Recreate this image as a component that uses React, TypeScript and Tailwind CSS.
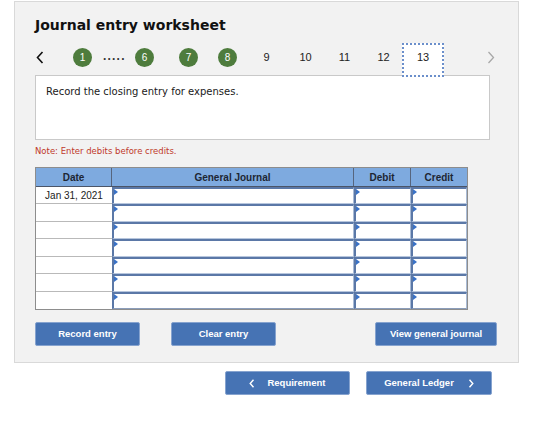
import React from "react";

const sans = { fontFamily: '"Liberation Sans", Arial, sans-serif' };
const verd = { fontFamily: '"DejaVu Sans", Verdana, sans-serif' };

function Circle({ n }: { n: string }) {
  return (
    <div className="w-[19px] h-[19px] rounded-full bg-[#4e7c3d] text-white text-[10px] flex items-center justify-center shrink-0" style={sans}>
      {n}
    </div>
  );
}

function Num({ n }: { n: string }) {
  return (
    <div className="w-[39px] shrink-0 text-center text-[11px] text-[#222]" style={sans}>
      {n}
    </div>
  );
}

function InputCell({ last }: { last?: boolean }) {
  return (
    <div className={`relative bg-white border-t-2 border-t-[#5b78a7] border-l-2 border-l-[#5b78a7] border-r border-r-[#a9bbd6] ${last ? "border-b border-b-[#8b9dba]" : "border-b border-b-[#b7c6dd]"}`}>
      <div className="absolute top-0 left-0 w-0 h-0 border-t-[3px] border-b-[3px] border-l-[4px] border-t-transparent border-b-transparent border-l-[#3a72c6]" />
    </div>
  );
}

function Btn({ children, w, className = "" }: { children: React.ReactNode; w: string; className?: string }) {
  return (
    <div
      className={`${w} h-[24px] shrink-0 bg-[#4673b4] border border-[#86a3cf] rounded-[2px] text-white text-[9.5px] font-bold flex items-center justify-center ${className}`}
      style={sans}
    >
      {children}
    </div>
  );
}

export default function App() {
  const heights = ["h-[17px]", "h-[18px]", "h-[17px]", "h-[18px]", "h-[17px]", "h-[18px]", "h-[17px]"];
  return (
    <div className="w-[560px] h-[421px] bg-white overflow-hidden">
      <div className="ml-[14px] mt-[1px] w-[505px] h-[362px] bg-[#f2f2f2] border border-[#d9d9d9] pl-[20px] pt-[15px]">
        <div className="text-[14px] leading-[17px] font-bold text-[#111]" style={verd}>
          Journal entry worksheet
        </div>

        <div className="mt-[9px] h-[28px] flex items-center relative z-10">
          <div className="w-[10px] shrink-0 flex justify-center">
            <svg width="8" height="13" viewBox="0 0 8 13">
              <polyline points="6.5,1 1.5,6.5 6.5,12" fill="none" stroke="#111" strokeWidth="1.6" />
            </svg>
          </div>
          <div className="ml-[28px]"><Circle n="1" /></div>
          <div className="ml-[11px] w-[29px] shrink-0 text-[12px] font-bold tracking-[1.2px] text-[#333] leading-[12px] pb-[3px]" style={sans}>
            .....
          </div>
          <div className="ml-[3px]"><Circle n="6" /></div>
          <div className="ml-[25px]"><Circle n="7" /></div>
          <div className="ml-[20px]"><Circle n="8" /></div>
          <div className="ml-[10px] flex">
            <Num n="9" />
            <Num n="10" />
            <Num n="11" />
            <Num n="12" />
          </div>
          <div className="-ml-[1px] self-start w-[42px] h-[34px] shrink-0 bg-white border-2 border-dotted border-[#6b8fcb] text-center text-[11px] leading-[14px] pt-[5px] text-[#222]" style={sans}>
            13
          </div>
          <div className="ml-[43px] shrink-0">
            <svg width="8" height="13" viewBox="0 0 8 13">
              <polyline points="1.5,1 6.5,6.5 1.5,12" fill="none" stroke="#a8a8a8" strokeWidth="1.3" />
            </svg>
          </div>
        </div>

        <div className="mt-[4px] w-[455px] h-[65px] bg-white border border-[#c9c9c9] pl-[10px] pt-[10px]">
          <div className="text-[10px] leading-[12px] text-[#1a1a1a]" style={verd}>
            Record the closing entry for expenses.
          </div>
        </div>

        <div className="mt-[5px] text-[8.5px] leading-[12px] text-[#c0392b]" style={verd}>
          Note: Enter debits before credits.
        </div>

        <div className="mt-[10px] w-[433px] border border-[#8d8d8d]" style={sans}>
          <div className="grid grid-cols-[76px_242px_57px_56px] h-[19px] bg-[#7eaadf] border-b border-b-[#4b5568] text-[10px] font-bold text-[#1d2633]">
            <div className="flex items-center justify-center border-r border-r-[#56657e]">Date</div>
            <div className="flex items-center justify-center border-r border-r-[#56657e]">General Journal</div>
            <div className="flex items-center justify-center border-r border-r-[#56657e]">Debit</div>
            <div className="flex items-center justify-center">Credit</div>
          </div>
          {heights.map((h, i) => (
            <div key={i} className={`grid grid-cols-[76px_242px_57px_56px] ${h}`}>
              <div className={`bg-white flex items-center justify-center text-[10px] text-[#222] ${i < 6 ? "border-b border-b-[#b9b9b9]" : ""}`}>
                {i === 0 ? "Jan 31, 2021" : ""}
              </div>
              <InputCell last={i === 6} />
              <InputCell last={i === 6} />
              <InputCell last={i === 6} />
            </div>
          ))}
        </div>

        <div className="mt-[12px] flex">
          <Btn w="w-[105px]">Record entry</Btn>
          <Btn w="w-[105px]" className="ml-[31px]">Clear entry</Btn>
          <Btn w="w-[122px]" className="ml-[99px]">View general journal</Btn>
        </div>
      </div>

      <div className="mt-[8px] ml-[225px] flex">
        <Btn w="w-[125px]">
          <svg width="6" height="9" viewBox="0 0 6 9" className="mr-[12px]">
            <polyline points="4.5,0.8 1.2,4.5 4.5,8.2" fill="none" stroke="#fff" strokeWidth="1.4" />
          </svg>
          Requirement
        </Btn>
        <Btn w="w-[126px]" className="ml-[16px]">
          General Ledger
          <svg width="6" height="9" viewBox="0 0 6 9" className="ml-[14px]">
            <polyline points="1.5,0.8 4.8,4.5 1.5,8.2" fill="none" stroke="#fff" strokeWidth="1.4" />
          </svg>
        </Btn>
      </div>
    </div>
  );
}
